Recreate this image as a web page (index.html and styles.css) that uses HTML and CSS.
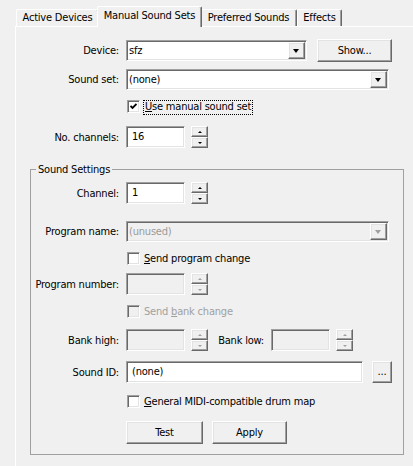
FILE: index.html
```html
<!DOCTYPE html>
<html lang="en">
<head>
    <meta charset="UTF-8">
    <title>Manual Sound Sets</title>
    <link rel="stylesheet" href="styles.css">
</head>
<body>
    <div class="tabs">
        <div class="tab tab-devices">Active Devices</div>
        <div class="tab tab-manual selected">Manual Sound Sets</div>
        <div class="tab tab-preferred">Preferred Sounds</div>
        <div class="tab tab-effects">Effects</div>
    </div>

    <div class="panel">
        <div class="row row-device">
            <span class="label">Device:</span>
            <div class="combo combo-device"><span class="value">sfz</span><span class="drop"></span></div>
            <button class="btn btn-show">Show...</button>
        </div>

        <div class="row row-soundset">
            <span class="label">Sound set:</span>
            <div class="combo combo-soundset"><span class="value">(none)</span><span class="drop"></span></div>
        </div>

        <div class="check-row row-manual">
            <span class="checkbox">
                <svg width="7" height="7" viewBox="0 0 7 7"><polyline points="0.5,3 2.5,5 6.5,1" fill="none" stroke="#000" stroke-width="1.8"/></svg>
            </span>
            <span class="focus"><u>U</u>se manual sound set</span>
        </div>

        <div class="row row-channels">
            <span class="label">No. channels:</span>
            <div class="edit edit-small">16</div>
            <div class="spin">
                <span class="spin-btn up"></span>
                <span class="spin-btn down"></span>
            </div>
        </div>

        <fieldset class="group">
            <legend>Sound Settings</legend>

            <div class="row row-channel">
                <span class="label">Channel:</span>
                <div class="edit edit-small">1</div>
                <div class="spin">
                    <span class="spin-btn up"></span>
                    <span class="spin-btn down"></span>
                </div>
            </div>

            <div class="row row-program-name">
                <span class="label">Program name:</span>
                <div class="combo combo-program disabled"><span class="value">(unused)</span><span class="drop"></span></div>
            </div>

            <div class="check-row row-send-program">
                <span class="checkbox"></span>
                <span class="check-text"><u>S</u>end program change</span>
            </div>

            <div class="row row-program-number">
                <span class="label">Program number:</span>
                <div class="edit edit-small disabled"></div>
                <div class="spin disabled">
                    <span class="spin-btn up"></span>
                    <span class="spin-btn down"></span>
                </div>
            </div>

            <div class="check-row row-send-bank disabled">
                <span class="checkbox"></span>
                <span class="check-text">Send <u>b</u>ank change</span>
            </div>

            <div class="row row-bank">
                <span class="label">Bank high:</span>
                <div class="edit edit-small disabled"></div>
                <div class="spin disabled">
                    <span class="spin-btn up"></span>
                    <span class="spin-btn down"></span>
                </div>
                <span class="label-inline">Bank low:</span>
                <div class="edit edit-small disabled"></div>
                <div class="spin disabled">
                    <span class="spin-btn up"></span>
                    <span class="spin-btn down"></span>
                </div>
            </div>

            <div class="row row-sound-id">
                <span class="label">Sound ID:</span>
                <div class="edit edit-sound-id">(none)</div>
                <button class="btn btn-browse">...</button>
            </div>

            <div class="check-row row-drum-map">
                <span class="checkbox"></span>
                <span class="check-text"><u>G</u>eneral MIDI-compatible drum map</span>
            </div>

            <div class="row row-actions">
                <button class="btn btn-test">Test</button>
                <button class="btn btn-apply">Apply</button>
            </div>
        </fieldset>
    </div>
</body>
</html>
```

FILE: styles.css
```css
body {
    margin: 0;
    width: 413px;
    height: 466px;
    overflow: hidden;
    background-color: #f0f0f0;
    font-family: "DejaVu Sans Condensed", "DejaVu Sans", sans-serif;
    font-size: 11px;
    letter-spacing: -0.2px;
    color: #000;
}

/* tab strip */
.tabs {
    display: flex;
    height: 20px;
    padding: 6px 0 0 16px;
}
.tab {
    box-sizing: border-box;
    height: 17px;
    margin-top: 3px;
    border-top: 1px solid #fff;
    border-left: 1px solid #fff;
    border-right: 1px solid #696969;
    border-radius: 2px 2px 0 0;
    box-shadow: inset -1px 0 #a0a0a0;
    text-align: center;
    line-height: 15px;
    white-space: nowrap;
}
.tab-devices { width: 83px; }
.tab-manual { width: 105px; }
.tab-preferred { width: 97px; }
.tab-effects { width: 45px; }
.tab.selected {
    position: relative;
    z-index: 1;
    height: 21px;
    margin: 0 -2px -1px;
    background-color: #f0f0f0;
    line-height: 17px;
}

.panel {
    box-sizing: border-box;
    width: 398px;
    height: 440px;
    margin-left: 15px;
    border-top: 1px solid #fff;
    border-left: 1px solid #fff;
}

/* rows */
.row {
    display: flex;
    align-items: center;
}
.label {
    flex: none;
    width: 103px;
    padding-right: 7px;
    text-align: right;
    white-space: nowrap;
}
.group .label {
    width: 88px;
}
.label-inline {
    flex: none;
    width: 53px;
    padding: 0 7px 0 3px;
    text-align: right;
}

.row-device { margin-top: 12px; height: 23px; }
.row-soundset { margin-top: 7px; }
.row-manual { margin-top: 10px; }
.row-channels { margin-top: 11px; }

/* 3d controls */
.edit, .combo, .checkbox {
    box-sizing: border-box;
    border: 1px solid;
    border-color: #a0a0a0 #fff #fff #a0a0a0;
    box-shadow: inset 1px 1px #696969, inset -1px -1px #e3e3e3;
    background-color: #fff;
}
.edit {
    height: 22px;
    padding: 0 5px;
    line-height: 20px;
}
.edit-small { width: 59px; }
.edit-sound-id { width: 237px; }
.edit.disabled, .combo.disabled, .disabled .checkbox {
    background-color: #f0f0f0;
}

.combo {
    display: flex;
    align-items: center;
    height: 21px;
    padding: 0 1px 0 2px;
}
.combo-device { width: 181px; }
.combo-soundset, .combo-program { width: 263px; }
.combo .value { flex: 1; }
.combo.disabled .value { color: #9a9a9a; }

.btn, .drop, .spin-btn {
    box-sizing: border-box;
    border: 1px solid;
    border-color: #fff #696969 #696969 #fff;
    box-shadow: inset -1px -1px #a0a0a0, inset 1px 1px #e3e3e3;
    background-color: #f0f0f0;
}
.btn {
    height: 23px;
    padding: 0;
    font: inherit;
    letter-spacing: inherit;
    color: #000;
}
.btn-show { width: 75px; margin-left: 10px; }
.btn-browse { width: 20px; height: 22px; margin-left: 9px; line-height: 18px; }
.btn-test { width: 77px; }
.btn-apply { width: 75px; margin-left: 9px; }

.drop {
    position: relative;
    flex: none;
    width: 17px;
    height: 17px;
}
.drop::after {
    content: "";
    position: absolute;
    left: 4px;
    top: 6px;
    border-left: 3.5px solid transparent;
    border-right: 3.5px solid transparent;
    border-top: 4px solid #000;
}
.combo.disabled .drop::after { border-top-color: #a0a0a0; }

.spin {
    display: flex;
    flex-direction: column;
    margin-left: 6px;
    width: 17px;
}
.spin-btn {
    position: relative;
    height: 11px;
}
.spin-btn::after {
    content: "";
    position: absolute;
    left: 6px;
    top: 4px;
    border-left: 2px solid transparent;
    border-right: 2px solid transparent;
}
.spin-btn.up::after { border-bottom: 2px solid #000; }
.spin-btn.down::after { border-top: 2px solid #000; }
.spin.disabled .spin-btn.up::after { border-bottom-color: #a0a0a0; }
.spin.disabled .spin-btn.down::after { border-top-color: #a0a0a0; }

/* check boxes */
.check-row {
    display: flex;
    align-items: flex-start;
    padding-left: 111px;
    line-height: 13px;
}
.group .check-row { padding-left: 96px; }
.checkbox {
    flex: none;
    width: 13px;
    height: 13px;
    margin-right: 4px;
}
.checkbox svg {
    display: block;
    margin: 2px 0 0 2px;
}
.focus {
    margin-left: -1px;
    padding: 0 1px 1px;
    border: 1px dotted #000;
    line-height: 12px;
}
.check-row.disabled { color: #a0a0a0; }

/* group box */
.group {
    box-sizing: border-box;
    width: 374px;
    min-width: 0;
    margin: 15px 0 0 14px;
    padding: 0 0 10px;
    border: 1px solid #a0a0a0;
}
.group legend {
    margin-left: 5px;
    padding: 0 2px;
    line-height: 13px;
}
.row-channel { margin-top: 6px; }
.row-program-name { margin-top: 17px; }
.row-send-program { margin-top: 10px; }
.row-program-number { margin-top: 8px; }
.row-send-bank { margin-top: 10px; }
.row-bank { margin-top: 11px; }
.row-sound-id { margin-top: 10px; }
.row-drum-map { margin-top: 12px; }
.row-actions { margin-top: 13px; padding-left: 95px; }
```
